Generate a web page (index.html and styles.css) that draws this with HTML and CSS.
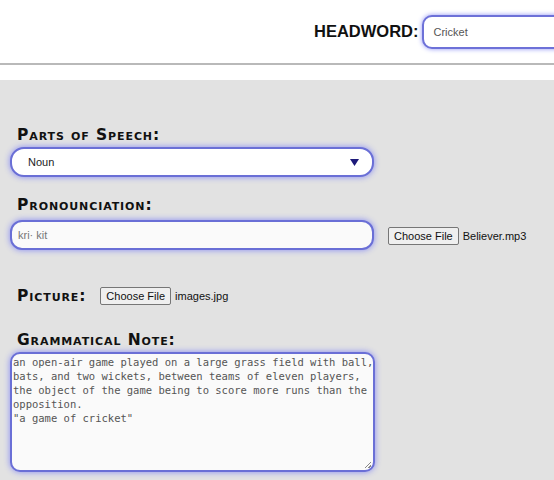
FILE: index.html
```html
<!DOCTYPE html>
<html>
<head>
<meta charset="utf-8">
<link rel="stylesheet" href="styles.css">
</head>
<body>
<header class="top">
  <label class="hw-label">HEADWORD:</label>
  <div class="hw-input">Cricket</div>
</header>
<div class="spacer"></div>
<main class="form">
  <div class="label l-pos">Parts of Speech:</div>
  <div class="field select">
    <span class="sel-text">Noun</span>
    <svg class="arrow" width="9" height="7" viewBox="0 0 9 7"><polygon points="0,0 9,0 4.5,7" fill="#1d1a7a"/></svg>
  </div>
  <div class="label l-pron">Pronounciation:</div>
  <div class="row">
    <div class="field text">kri· kit</div>
    <div class="file f-audio"><span class="btn">Choose File</span><span class="fname">Believer.mp3</span></div>
  </div>
  <div class="row pic-row">
    <div class="label inline">Picture:</div>
    <div class="file"><span class="btn">Choose File</span><span class="fname">images.jpg</span></div>
  </div>
  <div class="label l-note">Grammatical Note:</div>
  <div class="field area">an open-air game played on a large grass field with ball,
bats, and two wickets, between teams of eleven players,
the object of the game being to score more runs than the
opposition.
"a game of cricket"<span class="grip"></span></div>
</main>
</body>
</html>
```
FILE: styles.css
```css
html, body {
  margin: 0;
  padding: 0;
  overflow: hidden;
  background: #e2e2e2;
}
body {
  font-family: "Liberation Sans", Arial, sans-serif;
  width: 554px;
  height: 480px;
}
.top {
  background: #fff;
  height: 63px;
  display: flex;
  align-items: center;
  padding-left: 314px;
  border-bottom: 2px solid #b9b9b9;
  overflow: hidden;
}
.hw-label {
  font-weight: bold;
  font-size: 16.5px;
  color: #111;
  margin-right: 3px;
}
.hw-input {
  flex: none;
  width: 200px;
  height: 34px;
  box-sizing: border-box;
  border: 2px solid #6d71d8;
  border-radius: 10px;
  box-shadow: 0 0 5px #8f93f5;
  font-size: 11px;
  color: #555;
  line-height: 30px;
  padding-left: 10px;
  background: #fff;
}
.spacer {
  height: 15px;
  background: #fff;
}
.form {
  padding: 46px 0 0 10px;
}
.label {
  font-family: "DejaVu Sans", Verdana, sans-serif;
  font-weight: bold;
  font-variant: small-caps;
  font-size: 15.5px;
  letter-spacing: 0.9px;
  line-height: 18px;
  color: #111;
  margin-left: 7px;
}
.l-pos { margin-bottom: 3px; }
.field {
  box-sizing: border-box;
  width: 364px;
  background: #fff;
  border: 2px solid #6a6fd6;
  box-shadow: 0 0 6px #868af4;
}
.select {
  height: 30px;
  border-radius: 14px;
  display: flex;
  align-items: center;
  justify-content: space-between;
  padding: 0 13px 0 16px;
  font-size: 11px;
  color: #222;
}
.arrow { margin-top: 1px; }
.l-pron { margin-top: 19px; margin-bottom: 6px; }
.row {
  display: flex;
  align-items: center;
}
.text {
  height: 30px;
  border-radius: 12px;
  font-size: 11px;
  color: #777;
  line-height: 26px;
  padding-left: 6px;
  background: #fafafa;
}
.file {
  display: flex;
  align-items: center;
  font-size: 11px;
  color: #111;
}
.f-audio { margin-left: 14px; margin-top: 2px; }
.btn {
  display: inline-block;
  box-sizing: border-box;
  height: 18px;
  line-height: 16px;
  padding: 0 5px;
  border: 1px solid #767676;
  border-radius: 2px;
  background: #efefef;
  color: #111;
  font-size: 11px;
  margin-right: 4px;
}
.pic-row { margin-top: 37px; }
.label.inline { margin-right: 14px; }
.l-note { margin-top: 26px; margin-bottom: 3px; }
.area {
  position: relative;
  width: 365px;
  height: 120px;
  border-radius: 10px;
  background: #fafafa;
  white-space: pre;
  font-family: "DejaVu Sans Mono", monospace;
  font-size: 10.5px;
  line-height: 14px;
  color: #555;
  padding: 1px 0 0 1px;
}
.grip {
  position: absolute;
  right: 2px;
  bottom: 2px;
  width: 6px;
  height: 6px;
  background: linear-gradient(135deg, transparent 45%, #888 45%, #888 55%, transparent 55%, transparent 75%, #888 75%, #888 85%, transparent 85%);
}
```
